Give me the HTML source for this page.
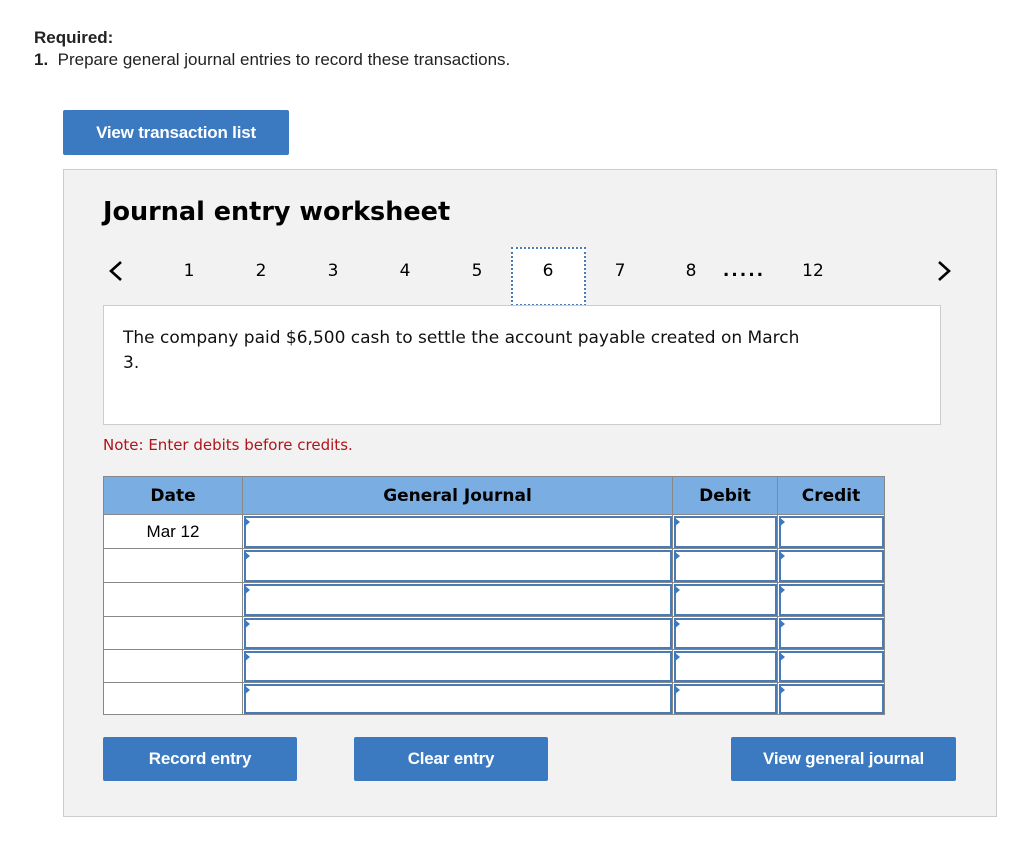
<!DOCTYPE html>
<html><head><style>
body{margin:0;width:1024px;height:865px;background:#fff;font-family:"Liberation Sans",sans-serif;position:relative;overflow:hidden}
.a{position:absolute}
.btn{position:absolute;background:#3b79c1;color:#fff;font-weight:bold;font-size:17px;text-align:center;border-radius:2px;box-sizing:border-box;letter-spacing:-0.2px}
.pg{position:absolute;top:261px;font-size:17px;color:#000;font-family:"DejaVu Sans",sans-serif;width:30px;text-align:center;margin-left:-15px}
td{border:1px solid #888;padding:0;height:32px;box-sizing:border-box}
.in{position:relative;background:#fff}
.in div.b{position:absolute;left:1px;right:0;top:1px;bottom:0;border:2px solid #4b7bb5}
.tri{position:absolute;left:1px;top:2px;width:0;height:0;border-top:5px solid transparent;border-bottom:5px solid transparent;border-left:6px solid #3b79c1}
</style></head><body>
<div class="a" style="left:34px;top:28px;font-size:17px;font-weight:bold;color:#222">Required:</div>
<div class="a" style="left:34px;top:50px;font-size:17px;color:#222"><b>1.</b> &nbsp;Prepare general journal entries to record these transactions.</div>
<div class="btn" style="left:63px;top:110px;width:226px;height:45px;line-height:45px">View transaction list</div>
<div class="a" style="left:63px;top:169px;width:932px;height:646px;background:#f2f2f2;border:1px solid #ccc"></div>
<div class="a" style="left:103px;top:197px;font-family:'DejaVu Sans',sans-serif;font-weight:bold;font-size:25.5px;color:#000">Journal entry worksheet</div>
<svg class="a" style="left:108px;top:260px" width="16" height="22"><path d="M13 2 L3 11 L13 20" fill="none" stroke="#000" stroke-width="2.6"/></svg>
<svg class="a" style="left:936px;top:260px" width="16" height="22"><path d="M3 2 L13 11 L3 20" fill="none" stroke="#000" stroke-width="2.6"/></svg>
<div class="a" style="left:511px;top:247px;width:71px;height:55px;background:#fff;border:2px dotted #4b7bb5"></div>
<div class="pg" style="left:189px">1</div><div class="pg" style="left:261px">2</div><div class="pg" style="left:333px">3</div><div class="pg" style="left:405px">4</div><div class="pg" style="left:477px">5</div><div class="pg" style="left:548px">6</div><div class="pg" style="left:620px">7</div><div class="pg" style="left:691px">8</div>
<div class="pg" style="left:744px;width:60px;margin-left:-30px;font-weight:bold;letter-spacing:2px">.....</div>
<div class="pg" style="left:813px">12</div>
<div class="a" style="left:103px;top:305px;width:836px;height:118px;background:#fff;border:1px solid #ccc"></div>
<div class="a" style="left:123px;top:326px;font-family:'DejaVu Sans',sans-serif;font-size:17px;line-height:25px;color:#111;width:700px">The company paid $6,500 cash to settle the account payable created on March<br>3.</div>
<div class="a" style="left:103px;top:436px;font-family:'DejaVu Sans',sans-serif;font-size:15px;color:#b0141a">Note: Enter debits before credits.</div>
<table class="a" style="left:103px;top:476px;border-collapse:collapse;width:782px;font-family:'DejaVu Sans',sans-serif">
<tr style="background:#7aaee3;font-weight:bold;font-size:17px;text-align:center"><td style="width:139px;height:38px">Date</td><td style="width:430px">General Journal</td><td style="width:105px">Debit</td><td style="width:107px">Credit</td></tr>
<tr><td style="background:#fff;text-align:center;font-family:'Liberation Sans';font-size:17px;height:34px">Mar 12</td><td class="in"><div class="b"></div><div class="tri"></div></td><td class="in"><div class="b"></div><div class="tri"></div></td><td class="in"><div class="b"></div><div class="tri"></div></td></tr>
<tr><td style="background:#fff;height:34px"></td><td class="in"><div class="b"></div><div class="tri"></div></td><td class="in"><div class="b"></div><div class="tri"></div></td><td class="in"><div class="b"></div><div class="tri"></div></td></tr>
<tr><td style="background:#fff;height:34px"></td><td class="in"><div class="b"></div><div class="tri"></div></td><td class="in"><div class="b"></div><div class="tri"></div></td><td class="in"><div class="b"></div><div class="tri"></div></td></tr>
<tr><td style="background:#fff;height:33px"></td><td class="in"><div class="b"></div><div class="tri"></div></td><td class="in"><div class="b"></div><div class="tri"></div></td><td class="in"><div class="b"></div><div class="tri"></div></td></tr>
<tr><td style="background:#fff;height:33px"></td><td class="in"><div class="b"></div><div class="tri"></div></td><td class="in"><div class="b"></div><div class="tri"></div></td><td class="in"><div class="b"></div><div class="tri"></div></td></tr>
<tr><td style="background:#fff;height:32px"></td><td class="in"><div class="b"></div><div class="tri"></div></td><td class="in"><div class="b"></div><div class="tri"></div></td><td class="in"><div class="b"></div><div class="tri"></div></td></tr>
</table>
<div class="btn" style="left:103px;top:737px;width:194px;height:44px;line-height:44px">Record entry</div>
<div class="btn" style="left:354px;top:737px;width:194px;height:44px;line-height:44px">Clear entry</div>
<div class="btn" style="left:731px;top:737px;width:225px;height:44px;line-height:44px">View general journal</div>
</body></html>
